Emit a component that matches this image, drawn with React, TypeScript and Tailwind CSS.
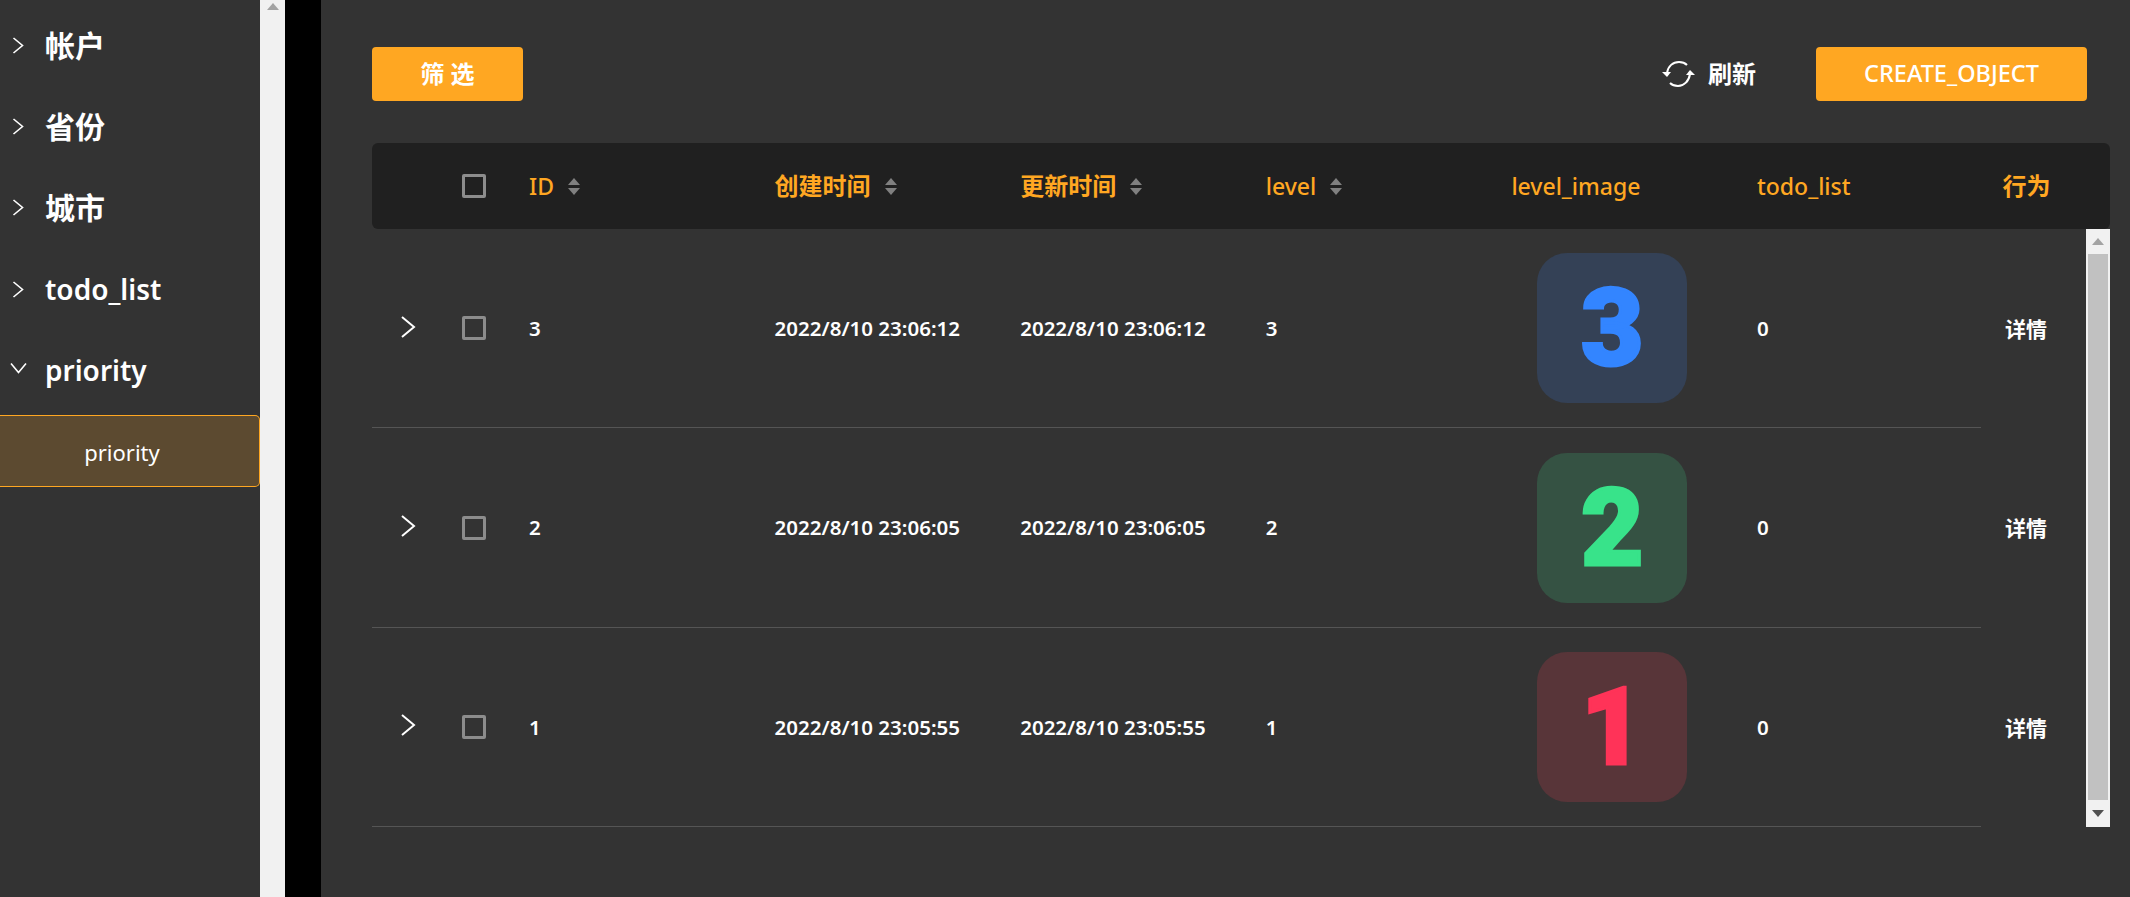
const menu = ["帐户", "省份", "城市", "todo_list"];

const rows = [
  { id: 3, time: "2022/8/10 23:06:12", box: "bg-[#344156]", color: "text-[#3385ff] [-webkit-text-stroke:3px_#3385ff]" },
  { id: 2, time: "2022/8/10 23:06:05", box: "bg-[#355243]", color: "text-[#38e38a] [-webkit-text-stroke:3px_#38e38a]" },
  { id: 1, time: "2022/8/10 23:05:55", box: "bg-[#583539]", color: "text-[#ff3358] [-webkit-text-stroke:3px_#ff3358]" },
];

function SortIcon() {
  return (
    <svg width="12" height="17" viewBox="0 0 12 17" className="ml-[14px] shrink-0">
      <path d="M6 0 L12 7 H0 Z" fill="#808080" />
      <path d="M6 17 L12 10 H0 Z" fill="#808080" />
    </svg>
  );
}

function Checkbox() {
  return <span className="block w-[24px] h-[24px] rounded-[2px] border-[3px] border-[#8c8c8c]" />;
}

function Chevron({ big }: { big?: boolean }) {
  return big ? (
    <svg width="16" height="22" viewBox="0 0 16 22" fill="none" stroke="#fff" strokeWidth="2" className="ml-[28px] -mt-[3px]">
      <path d="M2 1 L14 11 L2 21" />
    </svg>
  ) : (
    <svg width="12" height="17" viewBox="0 0 12 17" fill="none" stroke="#fff" strokeWidth="1.6" className="ml-[12px] shrink-0">
      <path d="M1.5 1 L10.5 8.5 L1.5 16" />
    </svg>
  );
}

function ChevronOpen() {
  return (
    <svg width="17" height="12" viewBox="0 0 17 12" fill="none" stroke="#fff" strokeWidth="1.6" className="ml-[10px] mr-[1px] -mt-[4px] shrink-0">
      <path d="M1 1.5 L8.5 10.5 L16 1.5" />
    </svg>
  );
}

function RefreshIcon() {
  return (
    <svg width="33" height="26" viewBox="0 0 33 26" fill="none" stroke="#fff" strokeWidth="2">
      <path d="M5 12 C6 5 11 1 17 1 C20 1 23 2 25 4" />
      <path d="M28 13 C27 20 22 25 16 25 C13 25 10 24 8 22" />
      <path d="M0 11 H9 L5 16 Z" fill="#fff" stroke="none" />
      <path d="M24 14 H33 L28 9 Z" fill="#fff" stroke="none" />
    </svg>
  );
}

function Arrow({ down, color }: { down?: boolean; color: string }) {
  return (
    <svg width="12" height="7" viewBox="0 0 12 7" className="shrink-0">
      <path d={down ? "M0 0 H12 L6 7 Z" : "M6 0 L12 7 H0 Z"} fill={color} />
    </svg>
  );
}

function HeaderCell({ label, sort, cjk }: { label: string; sort?: boolean; cjk?: boolean }) {
  return (
    <div className={cjk ? "flex items-center text-[#ffa722] text-[24px] font-bold" : "flex items-center text-[#ffa722] text-[23px] font-medium"}>
      <span className="whitespace-nowrap">{label}</span>
      {sort && <SortIcon />}
    </div>
  );
}

export default function App() {
  return (
    <div className="flex w-[2130px] h-[897px] overflow-hidden bg-black text-white font-['Noto_Sans','Noto_Sans_CJK_SC',sans-serif]">
      <aside className="w-[260px] shrink-0 bg-[#333333] pt-[5px]">
        {menu.map((m) => (
          <div key={m} className="flex items-center h-[81.2px]">
            <Chevron />
            <span className={m === "todo_list" ? "ml-[21px] text-[28px] font-semibold" : "ml-[21px] text-[30px] font-semibold"}>{m}</span>
          </div>
        ))}
        <div className="flex items-center h-[81.2px]">
          <ChevronOpen />
          <span className="ml-[17px] text-[28px] font-semibold">priority</span>
        </div>
        <div className="flex items-center justify-center h-[72px] mt-[4px] border border-l-0 border-[#ffa722] rounded-r-[5px] bg-[#5c4a30] text-[22px] pr-[15px] pt-[3px]">
          priority
        </div>
      </aside>

      <div className="w-[25px] shrink-0 bg-[#f1f1f1] flex justify-center pt-[3px]">
        <Arrow color="#a3a3a3" />
      </div>

      <main className="ml-[36px] flex-1 bg-[#333333] pl-[51px] pr-[20px] pt-[47px]">
        <div className="flex items-center h-[54px] pr-[23px]">
          <button className="w-[151px] h-[54px] rounded-[4px] bg-[#ffa722] text-[24px] font-semibold">筛 选</button>
          <div className="ml-auto flex items-center gap-[13px]">
            <RefreshIcon />
            <span className="text-[24px] font-semibold">刷新</span>
          </div>
          <button className="ml-[60px] w-[271px] h-[54px] rounded-[4px] bg-[#ffa722] text-[23.5px] font-medium">CREATE_OBJECT</button>
        </div>

        <div className="mt-[42px] h-[86px] rounded-[6px] bg-[#202020] grid grid-cols-[90px_67px_repeat(6,245.6px)_1fr] items-center">
          <div />
          <Checkbox />
          <HeaderCell label="ID" sort />
          <HeaderCell label="创建时间" sort cjk />
          <HeaderCell label="更新时间" sort cjk />
          <HeaderCell label="level" sort />
          <HeaderCell label="level_image" />
          <HeaderCell label="todo_list" />
          <HeaderCell label="行为" cjk />
        </div>

        <div className="flex">
          <div className="flex-1">
            {rows.map((r) => (
              <div key={r.id} className="flex h-[199.4px]">
                <div className="w-[1609px] border-b border-[#555555] grid grid-cols-[90px_67px_repeat(5,245.6px)_1fr] items-center text-[20.5px] font-semibold">
                  <Chevron big />
                  <Checkbox />
                  <span>{r.id}</span>
                  <span>{r.time}</span>
                  <span>{r.time}</span>
                  <span>{r.id}</span>
                  <div className="pl-[26px]">
                    <div className={`flex items-center justify-center w-[150px] h-[150px] rounded-[30px] ${r.box}`}>
                      <span className={`font-['Roboto',sans-serif] font-black text-[108px] leading-none ${r.color}`}>{r.id}</span>
                    </div>
                  </div>
                  <span>0</span>
                </div>
                <div className="ml-[24px] pt-[2px] flex items-center text-[21px] font-semibold">详情</div>
              </div>
            ))}
          </div>
          <div className="w-[24px] h-[598px] shrink-0 bg-[#f1f1f1] flex flex-col items-center">
            <div className="h-[25px] flex items-center"><Arrow color="#a3a3a3" /></div>
            <div className="flex-1 w-[20px] bg-[#c1c1c1]" />
            <div className="h-[27px] flex items-center"><Arrow down color="#505050" /></div>
          </div>
        </div>
      </main>
    </div>
  );
}
